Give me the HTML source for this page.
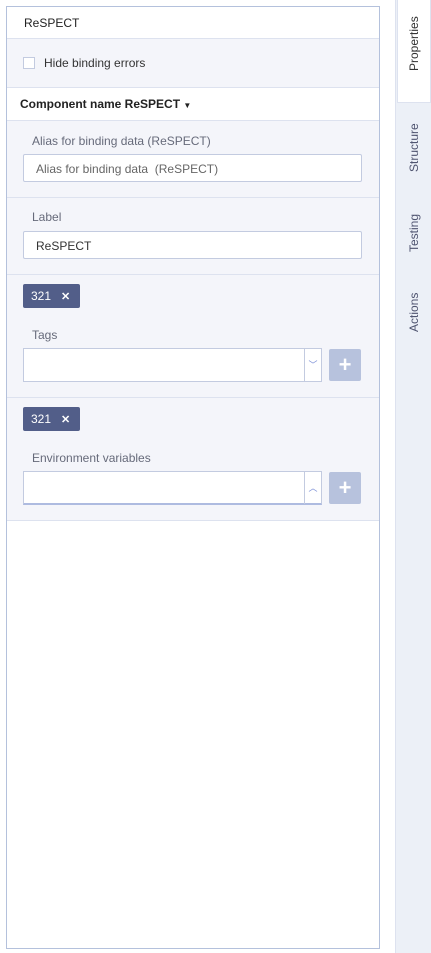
<!DOCTYPE html>
<html><head><style>
*{box-sizing:border-box;margin:0;padding:0}
body{width:431px;height:953px;background:#fff;font-family:"Liberation Sans",sans-serif;font-size:12px;color:#333;position:relative;overflow:hidden}
.panel{position:absolute;left:6px;top:6px;width:374px;height:943px;border:1px solid #b4c1dc;background:#fff}
.sec{position:absolute;left:0;width:372px;border-bottom:1px solid #dde2ef}
.g{background:#f4f5fa}
.lbl{position:absolute;left:25px;color:#666a7a;font-size:12px}
.inp{position:absolute;left:16px;width:339px;height:28px;border:1px solid #c3cbe0;background:#fff;border-radius:2px;font-size:12px;color:#555;padding:7px 12px}
.chip{position:absolute;left:16px;width:57px;height:24px;background:#525e89;color:#fff;border-radius:2px;font-size:12px;padding:5px 0 0 8px}
.chip b{font-size:11px;margin-left:10px}
.sel{position:absolute;left:16px;width:299px;height:34px;border:1px solid #c3cbe0;background:#fff}
.sel .arr{position:absolute;right:0;top:0;width:17px;height:32px;border-left:1px solid #c3cbe0;color:#7b8fd6;font-size:9px;text-align:center;line-height:32px}
.plus{position:absolute;left:322px;width:32px;height:32px;background:#b7c2dd;border-radius:2px;color:#fff;font-size:22px;text-align:center;line-height:31px;font-weight:bold}
.side{position:absolute;left:395px;top:0;width:36px;height:953px;background:#ecf0f7;border-left:1px solid #dde2ef}
.tab{position:absolute;left:1px;width:34px;writing-mode:vertical-rl;transform:rotate(180deg);font-size:12px;color:#4f5470;display:flex;align-items:center;justify-content:center}
</style></head><body>
<div class="panel">
 <div class="sec" style="top:0;height:32px"><span style="position:absolute;left:17px;top:9px;color:#222">ReSPECT</span></div>
 <div class="sec g" style="top:32px;height:49px">
  <div style="position:absolute;left:16px;top:18px;width:12px;height:12px;border:1px solid #c3cbe0;background:#fff"></div>
  <span style="position:absolute;left:37px;top:17px;color:#333">Hide binding errors</span></div>
 <div class="sec" style="top:81px;height:33px"><span style="position:absolute;left:13px;top:9px;color:#222;font-weight:bold;font-size:12px">Component name ReSPECT <span style="font-size:8px">▼</span></span></div>
 <div class="sec g" style="top:114px;height:77px">
  <span class="lbl" style="top:13px">Alias for binding data (ReSPECT)</span>
  <div class="inp" style="top:33px;color:#666">Alias for binding data&nbsp; (ReSPECT)</div></div>
 <div class="sec g" style="top:191px;height:77px">
  <span class="lbl" style="top:12px">Label</span>
  <div class="inp" style="top:33px;color:#333">ReSPECT</div></div>
 <div class="sec g" style="top:268px;height:123px">
  <div class="chip" style="top:9px">321<b>✕</b></div>
  <span class="lbl" style="top:53px">Tags</span>
  <div class="sel" style="top:73px"><div class="arr">﹀</div></div>
  <div class="plus" style="top:74px">+</div></div>
 <div class="sec g" style="top:391px;height:123px">
  <div class="chip" style="top:9px">321<b>✕</b></div>
  <span class="lbl" style="top:53px">Environment variables</span>
  <div class="sel" style="top:73px;border-bottom:2px solid #aebbe0"><div class="arr">︿</div></div>
  <div class="plus" style="top:74px">+</div></div>
</div>
<div class="side">
 <div class="tab" style="top:0;height:103px;background:#fff;border:1px solid #dde2ef;border-bottom:none;padding-top:14px"><span style="color:#333">Properties</span></div>
 <div class="tab" style="top:110px;height:76px">Structure</div>
 <div class="tab" style="top:200px;height:66px">Testing</div>
 <div class="tab" style="top:280px;height:64px">Actions</div>
</div>
</body></html>
